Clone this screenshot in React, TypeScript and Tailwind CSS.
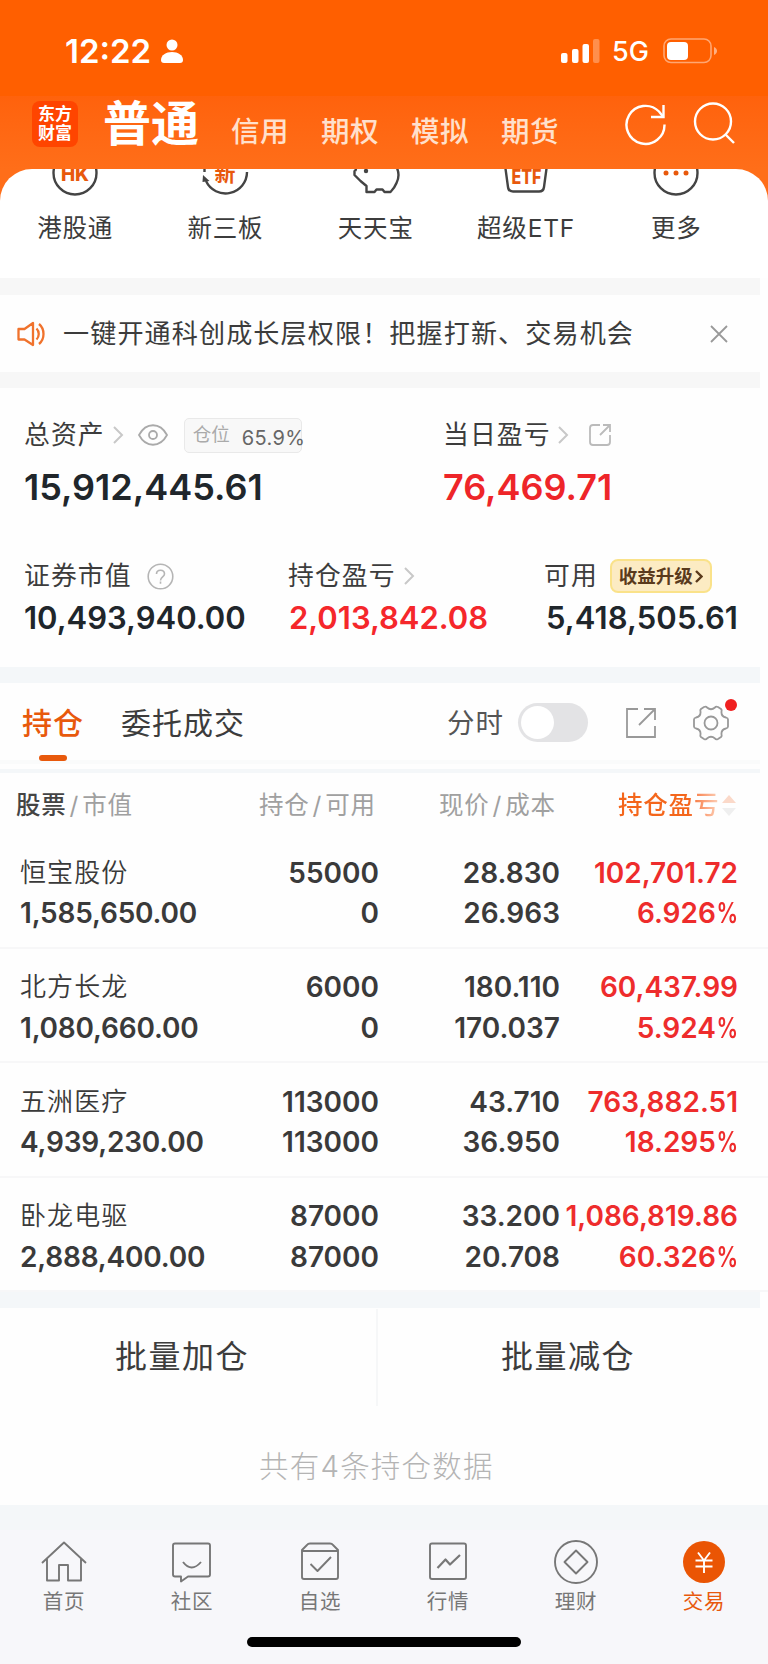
import type { ReactNode } from 'react'

const holdings = [
    { name: '恒宝股份', value: '1,585,650.00', amount: '55000', available: '0', price: '28.830', cost: '26.963', profit: '102,701.72', percent: '6.926' },
    { name: '北方长龙', value: '1,080,660.00', amount: '6000', available: '0', price: '180.110', cost: '170.037', profit: '60,437.99', percent: '5.924' },
    { name: '五洲医疗', value: '4,939,230.00', amount: '113000', available: '113000', price: '43.710', cost: '36.950', profit: '763,882.51', percent: '18.295' },
    { name: '卧龙电驱', value: '2,888,400.00', amount: '87000', available: '87000', price: '33.200', cost: '20.708', profit: '1,086,819.86', percent: '60.326' }
]

const StatusBar = () => (
    <div className="flex h-24 items-start bg-[#ff5f00] pt-[31px] pl-[65px] text-white">
        <span className="w-[96px] text-[33px] leading-[40px] font-semibold">12:22</span>
        <svg className="mt-[8px]" width="22" height="25" viewBox="0 0 22 25" fill="currentColor">
            <circle cx="11" cy="6" r="5.5" />
            <path d="M0 21c0-5 5-8 11-8s11 3 11 8c0 2-1 3-3 3H3c-2 0-3-1-3-3z" />
        </svg>
        <svg className="mt-[7px] ml-[378px]" width="40" height="26" viewBox="0 0 40 26" fill="currentColor">
            <rect x="0" y="15" width="6.5" height="10" rx="2" />
            <rect x="11" y="11" width="6.5" height="14" rx="2" />
            <rect x="21.5" y="6" width="6.5" height="19" rx="2" />
            <rect x="32" y="1" width="6.5" height="24" rx="2" opacity=".3" />
        </svg>
        <span className="ml-[11px] w-[51px] text-[27px] leading-[42px] font-medium">5G</span>
        <svg className="mt-[7px]" width="56" height="26" viewBox="0 0 56 26" fill="currentColor">
            <rect x="1" y="1" width="47" height="23.5" rx="7" fill="none" stroke="currentColor" strokeWidth="1.6" opacity=".45" />
            <rect x="4" y="4" width="21" height="18" rx="4" />
            <path d="M51 9c4 1.500 4 6.500 0 8z" opacity=".5" />
        </svg>
    </div>
)

const NavBar = () => (
    <div className="flex h-[73px] items-start pl-8 text-white">
        <div className="mt-[5px] flex h-[46px] w-[46px] flex-col items-center justify-center rounded-[8px] bg-[#ff4500] font-['Liberation_Serif','Noto_Sans_CJK_SC',serif] text-[17px] leading-[19px] font-bold">
            <span>东方</span>
            <span>财富</span>
        </div>
        <span className="ml-[25px] w-[128px] pt-px text-[48px] leading-[54px] font-bold">普通</span>
        {['信用', '期权', '模拟', '期货'].map((tab) => (
            <span key={tab} className="w-[90px] pt-[16px] text-[28.500px] leading-[40px] font-medium tracking-[0.500px] text-[#ffe0cc]">
                {tab}
            </span>
        ))}
        <svg className="mt-[7px] ml-[34px]" width="42" height="43" viewBox="0 0 42 43" fill="none" stroke="currentColor" strokeWidth="2.400">
            <path d="M39.500 21.500A19 19 0 1 1 34 8.500L38 13.500" />
            <path d="M38.500 2v12H26" />
        </svg>
        <svg className="mt-[6px] ml-[26px]" width="42" height="43" viewBox="0 0 42 43" fill="none" stroke="currentColor" strokeWidth="2.400">
            <circle cx="20" cy="19.500" r="18" />
            <path d="M32.500 32.500l8.500 8.500" />
        </svg>
    </div>
)

const QuickAction = ({ label, children }: { label: string; children: ReactNode }) => (
    <div className="flex w-[150.300px] flex-col items-center">
        <svg width="60" height="30" viewBox="-30 0 60 30" fill="none" stroke="#444" strokeWidth="2.400">
            {children}
        </svg>
        <span className="mt-[13px] text-[24.500px] leading-[32px] tracking-[0.800px] text-[#3c3c3c]">{label}</span>
    </div>
)

const QuickActions = () => (
    <div className="flex h-[109px] overflow-hidden rounded-t-[32px] bg-white">
        <QuickAction label="港股通">
            <circle cx="0" cy="4" r="21.500" />
            <text x="0" y="11.500" textAnchor="middle" fontSize="19" fontWeight="800" fill="#e8590c" stroke="none">HK</text>
        </QuickAction>
        <QuickAction label="新三板">
            <path d="M-19 12A21.500 21.500 0 0 0 22 3M-20.500 0v3" />
            <path d="M-22.500 13l.5-7 6.500 6z" fill="#444" stroke="none" />
            <text x="0" y="11.500" textAnchor="middle" fontSize="21" fontWeight="700" fill="#e8590c" stroke="none">新</text>
        </QuickAction>
        <QuickAction label="天天宝">
            <path d="M-21 -2q2 3-.500 4v4l6 6 6 5v6h8l2-2.500h6l2 2.500h6q4-4 6-9 4-8 0-16" strokeLinejoin="round" />
            <circle cx="-10" cy="2" r="2.200" fill="#444" stroke="none" />
        </QuickAction>
        <QuickAction label="超级ETF">
            <path d="M-21 -4l3 22q.500 4.500 5 4.500h26q4.500 0 5-4.500l3-22" />
            <text x="-14.500" y="15" textLength="30" lengthAdjust="spacingAndGlyphs" fontSize="19.500" fontWeight="800" fill="#e8590c" stroke="none">ETF</text>
        </QuickAction>
        <QuickAction label="更多">
            <circle cx="0" cy="4" r="21.500" />
            <g fill="#e8590c" stroke="none">
                <circle cx="-10" cy="4" r="2.500" />
                <circle cx="0" cy="4" r="2.500" />
                <circle cx="10" cy="4" r="2.500" />
            </g>
        </QuickAction>
    </div>
)

const Notice = () => (
    <div className="flex h-[77px] items-center pl-[17px]">
        <svg width="29" height="26" viewBox="0 0 29 26" fill="none" stroke="#f0722c" strokeWidth="2.300" strokeLinejoin="round">
            <path d="M1.500 8h6L16 2v22l-8.500-5.500h-6zM19.500 7.500c3 3 3 8 0 11M22 3c6 5 6 15 0 20" />
        </svg>
        <span className="ml-[17px] w-[647px] text-[26.100px] leading-[36px] tracking-[1.100px] text-[#3c3c3c]">
            一键开通科创成长层权限！把握打新、交易机会
        </span>
        <svg width="18" height="18" viewBox="0 0 18 18" stroke="#999" strokeWidth="1.800">
            <path d="M1 1l16 16M17 1L1 17" />
        </svg>
    </div>
)

const Chevron = ({ className }: { className: string }) => (
    <svg className={className} width="11" height="18" viewBox="0 0 11 18" fill="none" stroke="#c8c8c8" strokeWidth="2">
        <path d="M1 1l8 8-8 8" />
    </svg>
)

const Label = ({ children }: { children: ReactNode }) => (
    <span className="text-[25.800px] leading-[34px] tracking-[1.100px] text-[#3c3c3c]">{children}</span>
)

const Assets = () => (
    <div className="h-[279px] pt-[29px] pl-6 font-semibold text-[#20262b]">
        <div className="flex">
            <div className="w-[419px]">
                <div className="flex h-[36px] items-center font-normal">
                    <Label>总资产</Label>
                    <Chevron className="ml-[8px]" />
                    <svg className="ml-[14px]" width="30" height="22" viewBox="0 0 30 22" fill="none" stroke="#aaa" strokeWidth="1.800">
                        <path d="M1 11C8-2 22-2 29 11 22 24 8 24 1 11z" />
                        <circle cx="15" cy="11" r="4" />
                    </svg>
                    <div className="ml-[16px] flex h-[35px] w-[118px] items-center rounded-[5px] border border-[#e9e9e9] bg-[#f8f8f8] pl-[8px] whitespace-nowrap">
                        <span className="w-[49px] shrink-0 text-[18.500px] text-[#aaa]">仓位</span>
                        <span className="mt-[5px] text-[20px] leading-[24px] tracking-[0.400px] text-[#666]">65.9%</span>
                    </div>
                </div>
                <div className="mt-[11px] text-[36px] leading-[46px]">15,912,445.61</div>
            </div>
            <div>
                <div className="flex h-[36px] items-center font-normal">
                    <Label>当日盈亏</Label>
                    <Chevron className="ml-[7px]" />
                    <svg className="ml-[19px]" width="24" height="24" viewBox="0 0 24 24" fill="none" stroke="#bbb" strokeWidth="1.800">
                        <path d="M12 2H5Q2 2 2 5v14q0 3 3 3h14q3 0 3-3v-7M15 2h7v7M22 2L12 12" />
                    </svg>
                </div>
                <div className="mt-[11px] text-[36px] leading-[46px] text-[#ee2529]">76,469.71</div>
            </div>
        </div>
        <div className="mt-[46px] flex text-[31px] leading-[40px]">
            <div className="w-[264px]">
                <div className="flex h-[40px] items-center font-normal">
                    <Label>证券市值</Label>
                    <svg className="ml-[15px]" width="27" height="27" viewBox="0 0 27 27" fill="none" stroke="#b5b5b5" strokeWidth="1.600">
                        <circle cx="13.500" cy="13.500" r="12.300" />
                        <path d="M9.500 11c0-5 8-5 8 0 0 3-4 3-4 6.500M13.500 18.500v2.200" />
                    </svg>
                </div>
                <div className="mt-[2px]">10,493,940.00</div>
            </div>
            <div className="w-[256px]">
                <div className="flex h-[40px] items-center font-normal">
                    <Label>持仓盈亏</Label>
                    <Chevron className="ml-[8px]" />
                </div>
                <div className="mt-[2px] pl-px text-[#f5272b]">2,013,842.08</div>
            </div>
            <div>
                <div className="flex h-[40px] items-center font-normal">
                    <Label>可用</Label>
                    <div className="ml-[12px] flex h-[34px] w-[102px] items-center justify-center rounded-[8px] border-2 border-[#fae28a] bg-[#fcebc3] text-[18.500px] leading-[24px] font-bold text-[#5a3a1c]">
                        收益升级
                        <svg className="ml-[2px]" width="8" height="13" viewBox="0 0 8 13" fill="none" stroke="currentColor" strokeWidth="2.400">
                            <path d="M1 1l5.500 5.500L1 12" />
                        </svg>
                    </div>
                </div>
                <div className="mt-[2px] pl-[2px] tracking-[0.100px]">5,418,505.61</div>
            </div>
        </div>
    </div>
)

const HoldingTabs = () => (
    <div className="flex h-[77px] items-center pt-[2px] pl-[22px] text-[30px] leading-[40px] tracking-[1px] text-[#3c3c3c]">
        <div className="relative w-[99px] font-medium text-[#e8590c]">
            持仓
            <div className="absolute top-[52px] left-[17px] h-[6px] w-[28px] rounded-[3px] bg-[#e8590c]" />
        </div>
        <span className="w-[326px]">委托成交</span>
        <span className="w-[71px] text-[27.500px] text-[#555]">分时</span>
        <div className="flex h-[39px] w-[70px] items-center rounded-full bg-[#e3e3e5] pl-[3px]">
            <div className="h-[33px] w-[33px] rounded-full bg-white" />
        </div>
        <svg className="ml-[37px]" width="32" height="32" viewBox="0 0 32 32" fill="none" stroke="#999" strokeWidth="1.800">
            <path d="M13 2H2v28h28V19M19 2h11v11M30 2L14 18" />
        </svg>
        <div className="relative ml-[36px]">
            <svg width="36" height="36" viewBox="0 0 36 36" fill="none" stroke="#999" strokeWidth="1.800" strokeLinejoin="round">
                <path d="M11 2q2-1 3 .500 4 3.500 8 0 1-1.500 3-.500l3 2q1 1 .500 2.500-.500 5 4.500 6 2 .500 2 2v7q0 1.500-2 2-5 1-4.500 6 .500 1.500-.500 2.500l-3 2q-2 1-3-.500-4-3.500-8 0-1 1.500-3 .500l-3-2q-1-1-.500-2.500.500-5-4.500-6-2-.500-2-2v-7q0-1.500 2-2 5-1 4.500-6-.500-1.500.500-2.500z" />
                <circle cx="18" cy="18" r="6.500" />
            </svg>
            <div className="absolute -top-[6px] left-[32px] h-3 w-3 rounded-full bg-[#f02020]" />
        </div>
    </div>
)

const HoldingHead = () => (
    <div className="flex h-[61px] items-start pt-[14px] pl-4 text-[24.500px] leading-[36px] tracking-[0.800px] text-[#a0a0a0]">
        <div className="w-[243px]">
            <span className="font-medium text-[#444]">股票</span>
            <span className="px-[3px]">/</span>市值
        </div>
        <div className="w-[180px]">
            持仓<span className="px-[3px]">/</span>可用
        </div>
        <div className="w-[179px]">
            现价<span className="px-[3px]">/</span>成本
        </div>
        <div className="flex items-center">
            <span className="bg-linear-to-r from-[#f4661b] from-70% to-[#fbd0b8] bg-clip-text font-medium text-transparent">持仓盈亏</span>
            <svg className="ml-[3px]" width="14" height="21" viewBox="0 0 14 21">
                <path d="M7 0l7 8H0z" fill="#fbd9c9" />
                <path d="M0 13h14l-7 8z" fill="#efefef" />
            </svg>
        </div>
    </div>
)

const HoldingRow = ({ name, value, amount, available, price, cost, profit, percent }: (typeof holdings)[number]) => (
    <div className="grid h-[114.500px] grid-cols-[218px_141px_181px_178px] border-b-2 border-[#f7f7f8] pt-[18.500px] pl-5 text-[28px] leading-[40.500px] font-semibold text-[#3a3a3a]">
        <div>
            <div className="text-[26px] font-[350] tracking-[1.100px]">{name}</div>
            <div className="tracking-[-0.200px]">{value}</div>
        </div>
        <div className="text-right">
            <div>{amount}</div>
            <div>{available}</div>
        </div>
        <div className="text-right">
            <div>{price}</div>
            <div>{cost}</div>
        </div>
        <div className="text-right whitespace-nowrap text-[#ee2c2c]">
            <div>{profit}</div>
            <div>
                {percent}
                <span className="-ml-[6px] inline-block origin-right scale-x-[0.770]">%</span>
            </div>
        </div>
    </div>
)

const TabItem = ({ label, active, children }: { label: string; active?: boolean; children: ReactNode }) => (
    <div className={active ? 'flex w-32 flex-col items-center text-[#e8590c]' : 'flex w-32 flex-col items-center text-[#777]'}>
        <svg width="46" height="46" viewBox="0 0 46 46" fill="none" stroke="currentColor" strokeWidth="1.900" strokeLinejoin="round">
            {children}
        </svg>
        <span className="mt-[3px] text-[20.500px] leading-[28px] tracking-[0.800px]">{label}</span>
    </div>
)

const BottomBar = () => (
    <div className="h-[135px] bg-[#f7f7fa] pt-[9px]">
        <div className="flex">
            <TabItem label="首页">
                <path d="M1 24L23 3.500 45 24M6 20v21.500h12V26h9v15.500h13V20" />
            </TabItem>
            <TabItem label="社区">
                <path d="M6 4.500h33q2 0 2 2v29q0 2-2 2H19l-7 5v-5H6q-2 0-2-2v-29q0-2 2-2zM14 23q8.500 11 18 0" />
            </TabItem>
            <TabItem label="自选">
                <path d="M5 11l5-5q1-1.500 3-1.500h20q2 0 3 1.500l5 5v27q0 2-2 2H7q-2 0-2-2zM5 12h36M13.500 25l7 7L34 18" />
            </TabItem>
            <TabItem label="行情">
                <rect x="5" y="4.500" width="36" height="35.500" rx="2" />
                <path d="M12.500 29l8-8.500 4.500 5L35 16" strokeWidth="2.200" />
            </TabItem>
            <TabItem label="理财">
                <circle cx="23" cy="23" r="21" />
                <path d="M23 11.500L34.500 23 23 34.500 11.500 23z" />
            </TabItem>
            <TabItem label="交易" active>
                <circle cx="23" cy="23" r="21" fill="#ea5504" stroke="none" />
                <path d="M17 13.500l6 8 6-8M23 21.500V34M14.500 21.500h17M14.500 27.500h17" stroke="#fff" />
            </TabItem>
        </div>
        <div className="mx-auto mt-[21px] h-[10px] w-[274px] rounded-full bg-black" />
    </div>
)

const App = () => {
    return (
        <div className="h-[1664px] w-[768px] overflow-hidden bg-[#fefefe] font-['Inter','Noto_Sans_CJK_SC',sans-serif]">
            <StatusBar />
            <div className="bg-linear-to-b from-[#ff620c] to-[#ff6e19] to-[73px]">
                <NavBar />
                <QuickActions />
            </div>
            <div className="h-[17px] w-[760px] bg-[#f7f7f7]" />
            <Notice />
            <div className="h-4 w-[760px] bg-[#f7f7f7]" />
            <Assets />
            <div className="h-4 w-[760px] bg-[#f4f7f9]" />
            <HoldingTabs />
            <div className="h-[13px] w-[760px] border-t-4 border-b-4 border-t-[#fafbfb] border-b-[#f4f7f9]" />
            <HoldingHead />
            {holdings.map((item) => (
                <HoldingRow key={item.name} {...item} />
            ))}
            <div className="h-4 w-[760px] bg-[#f4f7f9]" />
            <div className="flex h-[98px] pt-px text-[32px] leading-[96px] tracking-[1.500px] text-[#3c3c3c]">
                <div className="w-[378px] border-r-2 border-[#f6f7f8] pl-[115px]">批量加仓</div>
                <div className="pl-[123px]">批量减仓</div>
            </div>
            <div className="h-[99px] pt-[39px] pl-[259px] text-[29.500px] leading-[42px] font-light tracking-[1.200px] text-[#b4b4b4]">
                共有4条持仓数据
            </div>
            <div className="h-[25px] bg-[#f4f7f9]" />
            <BottomBar />
        </div>
    )
}

export default App
